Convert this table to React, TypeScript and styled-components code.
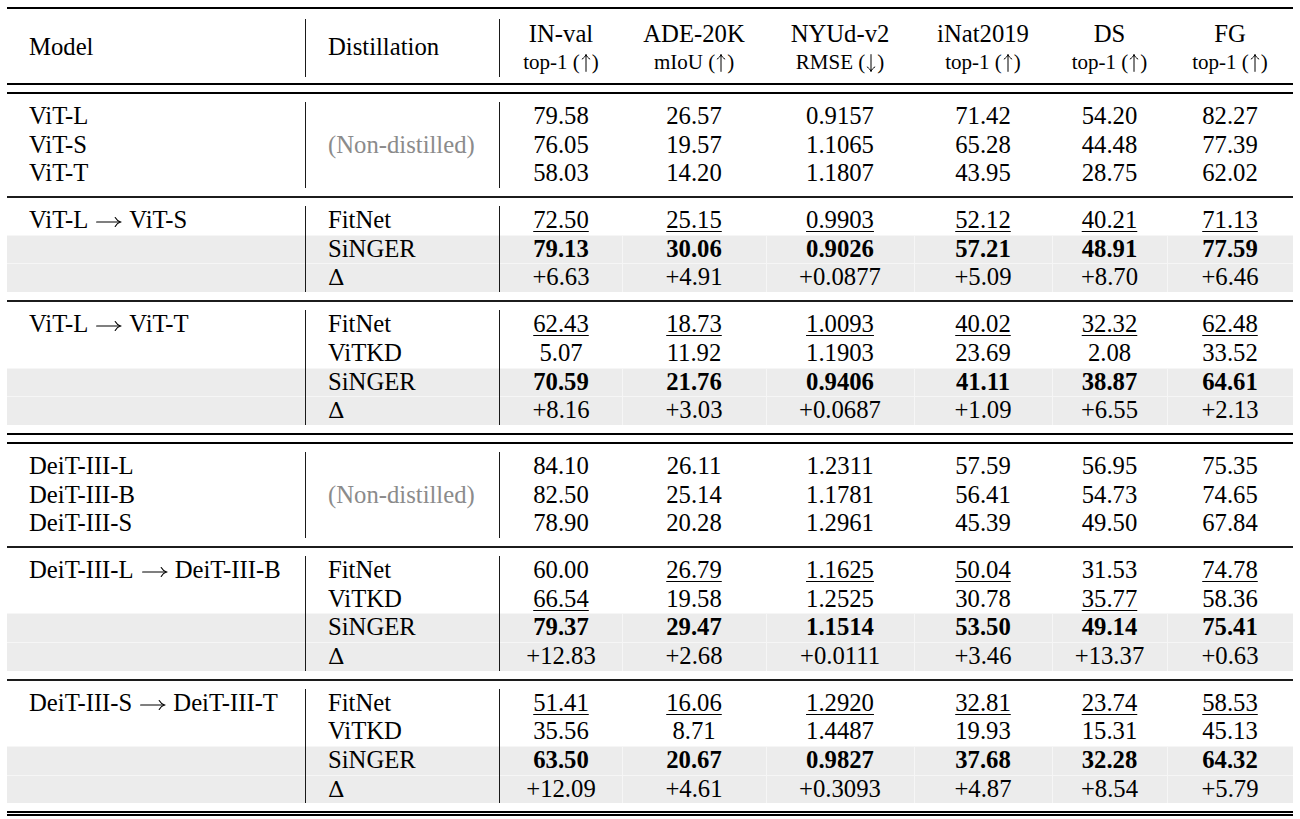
import React, { FC } from 'react'
import styled, { createGlobalStyle, css } from 'styled-components'

const GlobalStyle = createGlobalStyle`
  html, body {
    margin: 0;
    padding: 0;
    background: #ffffff;
  }
  body {
    font-family: 'Liberation Serif', 'Times New Roman', serif;
    color: #000;
  }
`

const COLS = '299px 194px 122px 144px 148px 138px 115px 126px'

const PAGE = styled.div`
  width: 1300px;
  height: 819px;
  box-sizing: border-box;
  padding: 7px 7px 0;
  overflow: hidden;
`

const TABLE = styled.div`
  width: 1286px;
  font-size: 24.7px;
`

const RULE = styled.div<{ $color?: string }>`
  height: 0;
  border-top: 2px solid ${({ $color }) => $color ?? '#000'};
`

const DOUBLE_RULE = styled.div<{ $gap: number }>`
  height: ${({ $gap }) => $gap}px;
  border-top: 2px solid #000;
  border-bottom: 2px solid #000;
`

const HEADER = styled.div`
  display: grid;
  grid-template-columns: ${COLS};
  grid-template-rows: 29px 29px;
  padding: 10px 0 6px;
`

const HEAD_CELL = styled.div<{ $divider?: boolean; $tall?: boolean; $small?: boolean; $left?: boolean }>`
  display: flex;
  align-items: center;
  justify-content: ${({ $left }) => ($left ? 'flex-start' : 'center')};
  padding-left: ${({ $left }) => ($left ? '22px' : '0')};
  white-space: nowrap;
  font-size: ${({ $small }) => ($small ? '21px' : '24.7px')};
  ${({ $tall }) => $tall && 'grid-row: span 2; padding-bottom: 2px;'}
  ${({ $divider }) => $divider && 'border-right: 1px solid #1a1a1a;'}
`

const GROUP = styled.div`
  padding: 8px 0 8px;
`

const ROW = styled.div<{ $shaded?: boolean }>`
  display: grid;
  grid-template-columns: ${COLS};
  height: 28.7px;
  line-height: 28.7px;
  ${({ $shaded }) =>
    $shaded &&
    css`
      background: #ececec;
      box-shadow: inset 0 1px 0 #f6f6f6;
    `}
`

const LABEL = styled.div<{ $muted?: boolean }>`
  padding-left: 22px;
  white-space: nowrap;
  border-right: 1px solid #1a1a1a;
  color: ${({ $muted }) => ($muted ? '#8b8b8b' : '#000')};
`

const VALUE = styled.div<{ $bold?: boolean; $shaded?: boolean; $first?: boolean }>`
  text-align: center;
  white-space: nowrap;
  font-weight: ${({ $bold }) => ($bold ? 700 : 400)};
  ${({ $shaded, $first }) => $shaded && !$first && 'box-shadow: inset 1px 0 0 #f6f6f6;'}
`

const UNDER = styled.span`
  text-decoration: underline;
  text-decoration-thickness: 1px;
  text-underline-offset: 3px;
`

const DELTA = styled.span`
  font-family: 'DejaVu Serif', serif;
  font-size: 23px;
`

const ARROW_SVG = styled.svg`
  display: inline-block;
  vertical-align: 0;
  margin: 0 8px;
  overflow: visible;
`

const METRIC_ARROW = styled.svg`
  display: inline-block;
  vertical-align: -4px;
  margin: 0 1px;
  overflow: visible;
`

const RightArrow: FC = () => (
  <ARROW_SVG width="25" height="12" viewBox="0 0 25 12" fill="none" stroke="#000" strokeWidth="1.1" strokeLinecap="round">
    <path d="M0.6 6H24.2" />
    <path d="M19.2 1.6C20.4 3.7 22 5.2 24.4 6C22 6.8 20.4 8.3 19.2 10.4" />
  </ARROW_SVG>
)

const VArrow: FC<{ down?: boolean }> = ({ down }) => (
  <METRIC_ARROW width="10" height="18" viewBox="0 0 10 18" fill="none" stroke="#000" strokeWidth="1" strokeLinecap="round">
    <g transform={down ? 'rotate(180 5 9)' : undefined}>
      <path d="M5 17.4V0.8" />
      <path d="M1.2 5C2.9 3.9 4.2 2.6 5 0.6C5.8 2.6 7.1 3.9 8.8 5" />
    </g>
  </METRIC_ARROW>
)

type RowData = { model?: string; method?: string; muted?: boolean; shaded?: boolean; bold?: boolean; vals: string[] }
type GroupData = { rows: RowData[]; after: 'mid' | 'double' | 'bottom' }

const heads: [string, string, boolean][] = [
  ['IN-val', 'top-1', false],
  ['ADE-20K', 'mIoU', false],
  ['NYUd-v2', 'RMSE', true],
  ['iNat2019', 'top-1', false],
  ['DS', 'top-1', false],
  ['FG', 'top-1', false],
]

const distilled = (model: string, fit: string[], vit: string[] | null, singer: string[], delta: string[], after: GroupData['after']): GroupData => ({
  after,
  rows: [
    { model, method: 'FitNet', vals: fit },
    ...(vit ? [{ method: 'ViTKD', vals: vit }] : []),
    { method: 'SiNGER', shaded: true, bold: true, vals: singer },
    { method: 'Δ', shaded: true, vals: delta },
  ],
})

const groups: GroupData[] = [
  {
    after: 'mid',
    rows: [
      { model: 'ViT-L', vals: ['79.58', '26.57', '0.9157', '71.42', '54.20', '82.27'] },
      { model: 'ViT-S', method: '(Non-distilled)', muted: true, vals: ['76.05', '19.57', '1.1065', '65.28', '44.48', '77.39'] },
      { model: 'ViT-T', vals: ['58.03', '14.20', '1.1807', '43.95', '28.75', '62.02'] },
    ],
  },
  distilled(
    'ViT-L → ViT-S',
    ['_72.50', '_25.15', '_0.9903', '_52.12', '_40.21', '_71.13'],
    null,
    ['79.13', '30.06', '0.9026', '57.21', '48.91', '77.59'],
    ['+6.63', '+4.91', '+0.0877', '+5.09', '+8.70', '+6.46'],
    'mid'
  ),
  distilled(
    'ViT-L → ViT-T',
    ['_62.43', '_18.73', '_1.0093', '_40.02', '_32.32', '_62.48'],
    ['5.07', '11.92', '1.1903', '23.69', '2.08', '33.52'],
    ['70.59', '21.76', '0.9406', '41.11', '38.87', '64.61'],
    ['+8.16', '+3.03', '+0.0687', '+1.09', '+6.55', '+2.13'],
    'double'
  ),
  {
    after: 'mid',
    rows: [
      { model: 'DeiT-III-L', vals: ['84.10', '26.11', '1.2311', '57.59', '56.95', '75.35'] },
      { model: 'DeiT-III-B', method: '(Non-distilled)', muted: true, vals: ['82.50', '25.14', '1.1781', '56.41', '54.73', '74.65'] },
      { model: 'DeiT-III-S', vals: ['78.90', '20.28', '1.2961', '45.39', '49.50', '67.84'] },
    ],
  },
  distilled(
    'DeiT-III-L → DeiT-III-B',
    ['60.00', '_26.79', '_1.1625', '_50.04', '31.53', '_74.78'],
    ['_66.54', '19.58', '1.2525', '30.78', '_35.77', '58.36'],
    ['79.37', '29.47', '1.1514', '53.50', '49.14', '75.41'],
    ['+12.83', '+2.68', '+0.0111', '+3.46', '+13.37', '+0.63'],
    'mid'
  ),
  distilled(
    'DeiT-III-S → DeiT-III-T',
    ['_51.41', '_16.06', '_1.2920', '_32.81', '_23.74', '_58.53'],
    ['35.56', '8.71', '1.4487', '19.93', '15.31', '45.13'],
    ['63.50', '20.67', '0.9827', '37.68', '32.28', '64.32'],
    ['+12.09', '+4.61', '+0.3093', '+4.87', '+8.54', '+5.79'],
    'bottom'
  ),
]

const ModelName: FC<{ text?: string }> = ({ text }) => {
  if (!text) return null
  const [from, to] = text.split(' → ')
  if (!to) return <>{text}</>
  return (
    <>
      {from}
      <RightArrow />
      {to}
    </>
  )
}

const Value: FC<{ raw: string; bold?: boolean; shaded?: boolean; first?: boolean }> = ({ raw, bold, shaded, first }) => (
  <VALUE $bold={bold} $shaded={shaded} $first={first}>
    {raw.startsWith('_') ? <UNDER>{raw.slice(1)}</UNDER> : raw}
  </VALUE>
)

const Separator: FC<{ kind: GroupData['after'] }> = ({ kind }) => {
  if (kind === 'double') return <DOUBLE_RULE $gap={7} />
  if (kind === 'bottom') return <DOUBLE_RULE $gap={1} />
  return <RULE $color="#1c1c1c" />
}

export default function App() {
  return (
    <PAGE>
      <GlobalStyle />
      <TABLE>
        <RULE />
        <HEADER>
          <HEAD_CELL $tall $left $divider>
            Model
          </HEAD_CELL>
          <HEAD_CELL $tall $left $divider>
            Distillation
          </HEAD_CELL>
          {heads.map(([title]) => (
            <HEAD_CELL key={title}>{title}</HEAD_CELL>
          ))}
          {heads.map(([title, metric, down]) => (
            <HEAD_CELL key={title + metric} $small>
              {metric} (<VArrow down={down} />)
            </HEAD_CELL>
          ))}
        </HEADER>
        <DOUBLE_RULE $gap={7} />
        {groups.map((group, gi) => (
          <React.Fragment key={gi}>
            <GROUP>
              {group.rows.map((row, ri) => (
                <ROW key={ri} $shaded={row.shaded}>
                  <LABEL>
                    <ModelName text={row.model} />
                  </LABEL>
                  <LABEL $muted={row.muted}>{row.method === 'Δ' ? <DELTA>Δ</DELTA> : row.method ?? ''}</LABEL>
                  {row.vals.map((v, vi) => (
                    <Value key={vi} raw={v} bold={row.bold} shaded={row.shaded} first={vi === 0} />
                  ))}
                </ROW>
              ))}
            </GROUP>
            <Separator kind={group.after} />
          </React.Fragment>
        ))}
      </TABLE>
    </PAGE>
  )
}
